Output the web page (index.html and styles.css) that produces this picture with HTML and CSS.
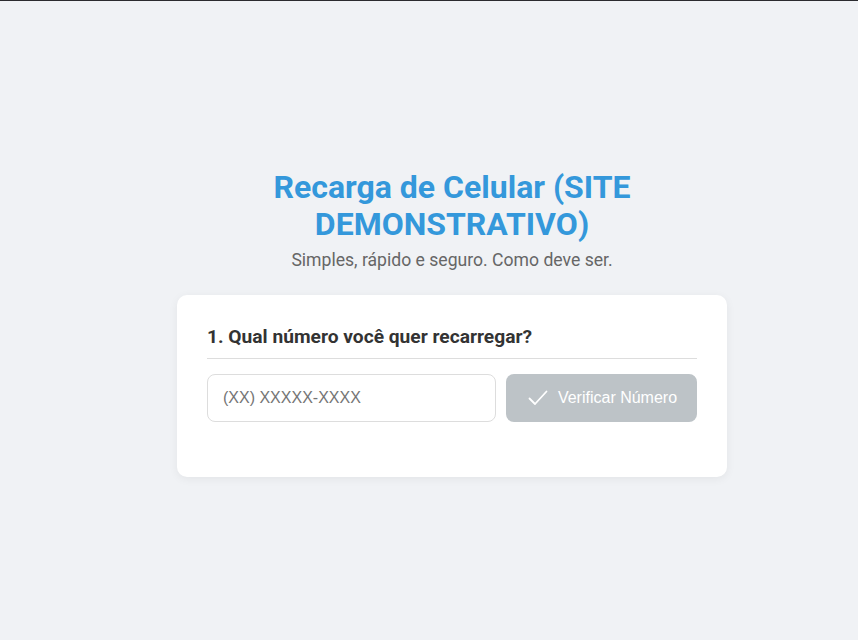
FILE: index.html
```html
<!DOCTYPE html>
<html lang="pt-BR">
<head>
<meta charset="utf-8">
<title>Recarga de Celular</title>
<link rel="stylesheet" href="styles.css">
</head>
<body>
<main class="container">
  <header class="header">
    <h1 class="title">Recarga de Celular (SITE DEMONSTRATIVO)</h1>
    <p class="subtitle">Simples, rápido e seguro. Como deve ser.</p>
  </header>
  <section class="card">
    <h2 class="step-title">1. Qual número você quer recarregar?</h2>
    <div class="form-row">
      <input class="phone-input" type="tel" placeholder="(XX) XXXXX-XXXX">
      <button class="verify-btn" type="button" disabled>
        <svg class="check" width="20" height="16" viewBox="0 0 20 16" fill="none" stroke="currentColor" stroke-width="1.8" stroke-linecap="round" stroke-linejoin="round"><path d="M1.5 8.5l5.5 5.5L18.5 1.5"/></svg>
        <span>Verificar Número</span>
      </button>
    </div>
  </section>
</main>
</body>
</html>
```

FILE: styles.css
```css
* { box-sizing: border-box; }
html, body { height: 100%; }
body {
  margin: 0;
  padding-left: 46px;
  background: #f0f2f5;
  border-top: 1px solid #2b2b2f;
  font-family: Roboto, "Liberation Sans", sans-serif;
  color: #333;
  display: flex;
  align-items: center;
  justify-content: center;
}
.container {
  width: 550px;
  margin-top: 5px;
}
.header {
  text-align: center;
  margin-bottom: 24px;
}
.title {
  margin: 0 auto;
  width: 400px;
  font-size: 32px;
  line-height: 37px;
  font-weight: 700;
  color: #3498db;
}
.subtitle {
  margin: 6px 0 0;
  font-size: 17.6px;
  line-height: 22px;
  color: #666;
}
.card {
  background: #fff;
  border-radius: 10px;
  box-shadow: 0 2px 10px rgba(0,0,0,0.06);
  padding: 30px 30px 55px;
}
.step-title {
  margin: 0 0 15px;
  padding-bottom: 10px;
  border-bottom: 1px solid #ddd;
  font-size: 19.2px;
  line-height: 23px;
  font-weight: 700;
  color: #333;
}
.form-row {
  display: flex;
  gap: 10px;
}
.phone-input {
  flex: 0 0 289px;
  height: 48px;
  padding: 0 15px;
  border: 1px solid #ddd;
  border-radius: 8px;
  font-family: "Liberation Sans", Arial, sans-serif;
  font-size: 16px;
  color: #333;
  background: #fff;
  outline: none;
}
.phone-input::placeholder { color: #757575; }
.verify-btn {
  flex: 1;
  height: 48px;
  border: none;
  border-radius: 8px;
  background: #bdc3c7;
  color: #fff;
  font-family: "Liberation Sans", Arial, sans-serif;
  font-size: 16px;
  display: flex;
  align-items: center;
  justify-content: center;
  gap: 10px;
  padding: 0 0 0 2px;
}
.check { display: block; }
```
